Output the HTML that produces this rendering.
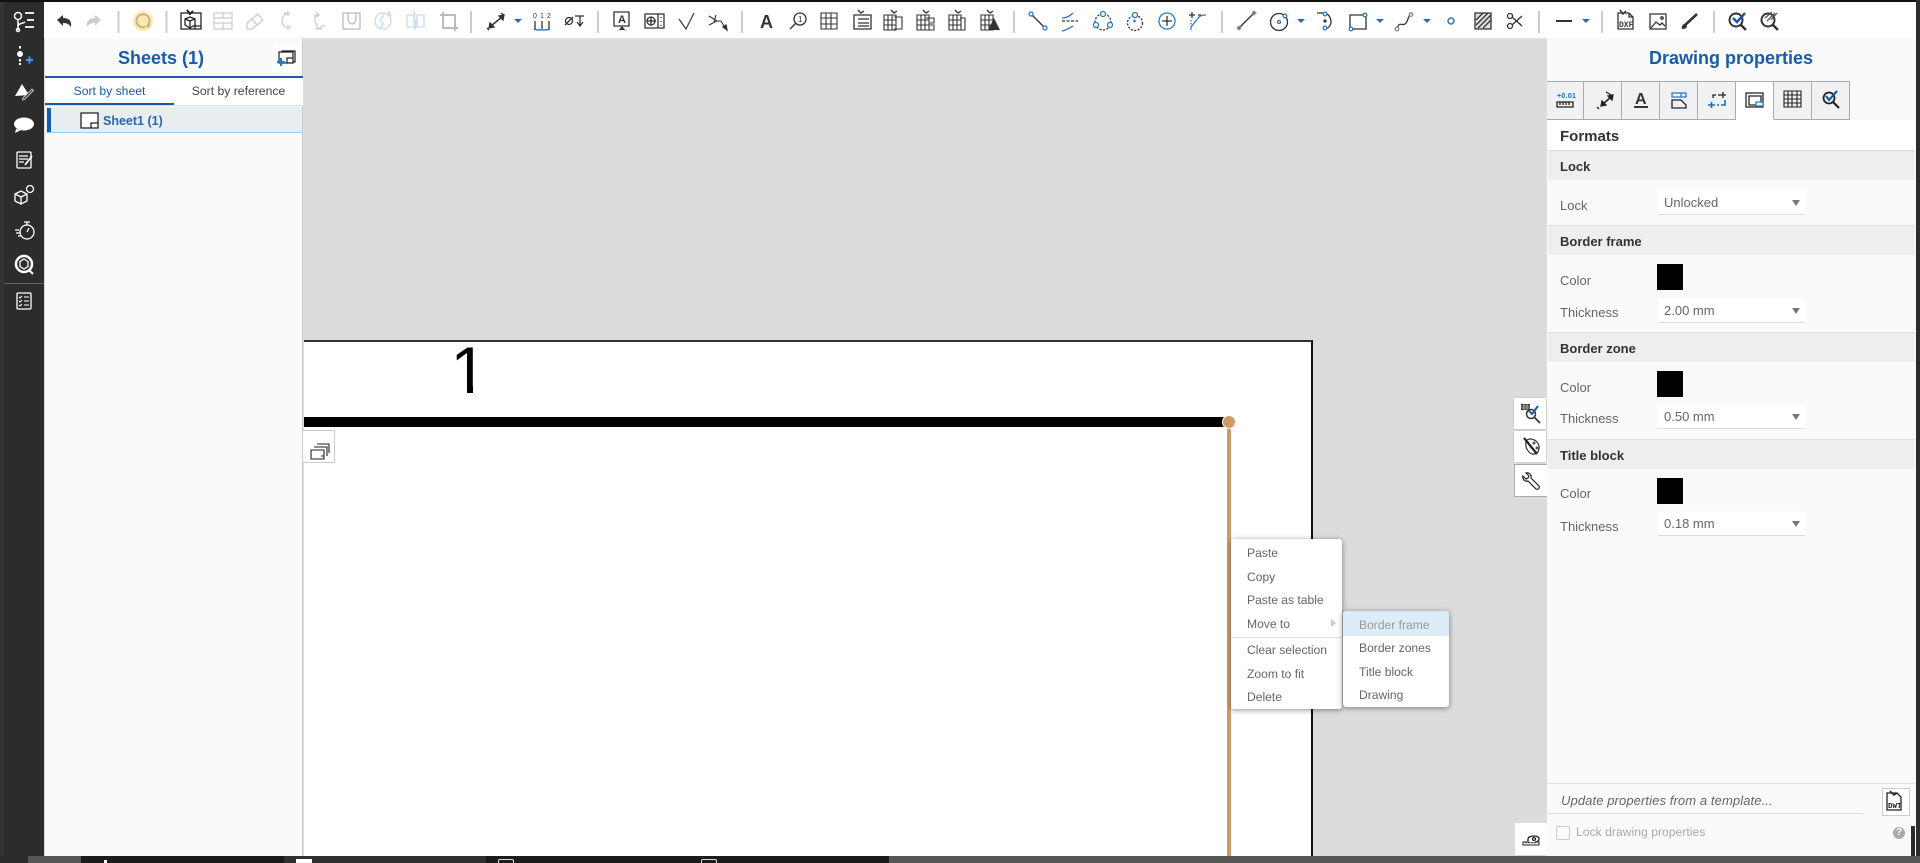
<!DOCTYPE html>
<html><head><meta charset="utf-8"><style>
html,body{margin:0;padding:0;width:1920px;height:863px;overflow:hidden;background:#dcdcdc}
body{position:relative;font-family:"Liberation Sans",sans-serif;font-size:13px;color:#555}
.a{position:absolute}
.t{position:absolute;white-space:nowrap;line-height:16px;height:16px}
.h{position:absolute;left:1548px;width:367px;height:29px;background:#eee;border-top:1px solid #ddd}
.h span{position:absolute;left:12px;top:8px;line-height:16px;font-weight:bold;font-size:13px;color:#333}
.sel{position:absolute;left:1658px;width:147px;height:24px;background:#fff;border-bottom:1.5px solid #ddd}
.sel span{position:absolute;left:6px;top:5px;line-height:16px;color:#666;font-size:13px}
.sel i{position:absolute;left:134px;top:10px;width:0;height:0;border:4px solid transparent;border-top:6px solid #777;border-bottom:0}
.sw{position:absolute;left:1657px;width:26px;height:26px;background:#000}
.tab{position:absolute;top:81px;height:37px;background:#f0f1f3;border:1px solid #aaa;border-left:0;box-sizing:content-box}
.side{position:absolute;left:1514px;width:32px;height:31px;background:#fff;box-shadow:0 0 2px #bbb}
.mi{position:absolute;white-space:nowrap;line-height:16px;color:#666;font-size:12.1px}
svg{position:absolute;left:0;top:0}
</style></head><body>
<!-- toolbar and frame -->
<div class="a" style="left:0;top:0;width:1920px;height:2px;background:#111"></div>
<div class="a" style="left:44px;top:2px;width:1872px;height:36px;background:#fff"></div>
<div class="a" style="left:0;top:2px;width:44px;height:854px;background:#2c2c2c"></div>
<div class="a" style="left:0;top:2px;width:4px;height:854px;background:#333"></div>
<div class="a" style="left:4px;top:283px;width:40px;height:1px;background:#666"></div>
<div class="a" style="left:1916px;top:0;width:4px;height:863px;background:#2c2c2c"></div>
<div class="a" style="left:44px;top:38px;width:1872px;height:1px;background:#e4e4e4"></div>

<!-- left panel -->
<div class="a" style="left:45px;top:38px;width:258px;height:818px;background:#fafafa;border-right:1px solid #ccc;box-sizing:border-box"></div>
<div class="t" style="left:46px;width:230px;text-align:center;top:47px;height:22px;line-height:22px;font-size:18px;font-weight:bold;color:#1a5ba8">Sheets (1)</div>
<div class="a" style="left:272px;top:44px;width:28px;height:28px;background:#fff;border-radius:4px"></div>
<div class="a" style="left:45px;top:76px;width:258px;height:2px;background:#1a5ba8"></div>
<div class="a" style="left:45px;top:78px;width:258px;height:27px;background:#fff"></div>
<div class="t" style="left:45px;width:129px;text-align:center;top:83px;font-size:12.2px;color:#1a5ba8">Sort by sheet</div>
<div class="t" style="left:174px;width:129px;text-align:center;top:83px;font-size:12.2px;color:#444">Sort by reference</div>
<div class="a" style="left:45px;top:103px;width:129px;height:2px;background:#1a5ba8"></div>
<div class="a" style="left:45px;top:105px;width:258px;height:1px;background:#ddd"></div>
<div class="a" style="left:46px;top:107px;width:256px;height:25px;background:#e8edf2;border-bottom:1px solid #8fd0f2"></div>
<div class="a" style="left:47px;top:108px;width:4px;height:24px;background:#1a5ba8"></div>
<div class="t" style="left:103px;top:113px;font-size:12.5px;font-weight:bold;color:#2a66ac">Sheet1 (1)</div>

<!-- sheet -->
<div class="a" style="left:304px;top:340px;width:1009px;height:523px;background:#fff;border-top:2px solid #333;border-right:2px solid #111;box-sizing:border-box"></div>
<div class="a" style="left:440px;top:333px;width:60px;height:55px;overflow:hidden"><div class="t" style="left:10.4px;top:0;height:74px;line-height:74px;font-size:66px;color:#000">1</div></div>
<div class="a" style="left:467px;top:386px;width:6px;height:7px;background:#000"></div>
<div class="a" style="left:304px;top:417px;width:922px;height:10px;background:#000"></div>
<div class="a" style="left:1227px;top:422px;width:4px;height:434px;background:#d09a64"></div>
<div class="a" style="left:1223px;top:416px;width:12px;height:12px;border-radius:50%;background:#d09a64;box-shadow:0 0 0 1px #fff"></div>
<div class="a" style="left:303px;top:430px;width:32px;height:33px;background:#fff;border:1px solid #ccc;border-left:0;box-sizing:border-box"></div>

<!-- context menus -->
<div class="a" style="left:1231px;top:539px;width:111px;height:170px;background:#fff;border-radius:3px;box-shadow:0 1px 6px rgba(0,0,0,.45)"></div>
<div class="mi" style="left:1247px;top:545px">Paste</div>
<div class="mi" style="left:1247px;top:569px">Copy</div>
<div class="mi" style="left:1247px;top:592px">Paste as table</div>
<div class="mi" style="left:1247px;top:616px">Move to</div>
<div class="a" style="left:1331px;top:619px;width:0;height:0;border:4px solid transparent;border-left:5px solid #ccc;border-right:0"></div>
<div class="a" style="left:1231px;top:637px;width:111px;height:1px;background:#ddd"></div>
<div class="mi" style="left:1247px;top:642px">Clear selection</div>
<div class="mi" style="left:1247px;top:666px">Zoom to fit</div>
<div class="mi" style="left:1247px;top:689px">Delete</div>
<div class="a" style="left:1343px;top:611px;width:106px;height:96px;background:#fff;border-radius:3px;box-shadow:0 1px 6px rgba(0,0,0,.45)"></div>
<div class="a" style="left:1343px;top:611px;width:106px;height:25px;background:#dcedf8;border-radius:3px 3px 0 0"></div>
<div class="mi" style="left:1359px;top:617px;color:#999">Border frame</div>
<div class="mi" style="left:1359px;top:640px">Border zones</div>
<div class="mi" style="left:1359px;top:664px">Title block</div>
<div class="mi" style="left:1359px;top:687px">Drawing</div>

<!-- right panel -->
<div class="a" style="left:1546px;top:38px;width:370px;height:818px;background:#fafafa;border-left:1px solid #ddd;box-sizing:border-box"></div>
<div class="t" style="left:1547px;width:368px;text-align:center;top:47px;height:22px;line-height:22px;font-size:18px;font-weight:bold;color:#1a5ba8">Drawing properties</div>
<div class="tab" style="left:1547px;width:36px"></div>
<div class="tab" style="left:1584px;width:37px"></div>
<div class="tab" style="left:1622px;width:37px"></div>
<div class="tab" style="left:1660px;width:37px"></div>
<div class="tab" style="left:1698px;width:37px"></div>
<div class="tab" style="left:1736px;width:37px;background:#fff;border-bottom-color:#fff"></div>
<div class="tab" style="left:1774px;width:37px"></div>
<div class="tab" style="left:1812px;width:37px"></div>
<div class="a" style="left:1547px;top:120px;width:368px;height:30px;background:#fff"></div>
<div class="t" style="left:1560px;top:129px;font-size:15px;font-weight:bold;color:#333">Formats</div>

<div class="h" style="top:150px"><span>Lock</span></div>
<div class="t" style="left:1560px;top:198px;color:#666">Lock</div>
<div class="sel" style="top:190px"><span>Unlocked</span><i></i></div>

<div class="h" style="top:225px"><span>Border frame</span></div>
<div class="t" style="left:1560px;top:273px;color:#666">Color</div><div class="sw" style="top:264px"></div>
<div class="t" style="left:1560px;top:305px;color:#666">Thickness</div>
<div class="sel" style="top:298px"><span>2.00 mm</span><i></i></div>

<div class="h" style="top:332px"><span>Border zone</span></div>
<div class="t" style="left:1560px;top:380px;color:#666">Color</div><div class="sw" style="top:371px"></div>
<div class="t" style="left:1560px;top:411px;color:#666">Thickness</div>
<div class="sel" style="top:404px"><span>0.50 mm</span><i></i></div>

<div class="h" style="top:439px"><span>Title block</span></div>
<div class="t" style="left:1560px;top:486px;color:#666">Color</div><div class="sw" style="top:478px"></div>
<div class="t" style="left:1560px;top:519px;color:#666">Thickness</div>
<div class="sel" style="top:511px"><span>0.18 mm</span><i></i></div>

<div class="a" style="left:1547px;top:783px;width:368px;height:1px;background:#ddd"></div>
<div class="t" style="left:1561px;top:793px;font-style:italic;color:#666;letter-spacing:.1px">Update properties from a template...</div>
<div class="a" style="left:1547px;top:813px;width:316px;height:1px;background:#ddd"></div>
<div class="a" style="left:1882px;top:788px;width:26px;height:26px;background:#fff;border:1px solid #ccc"></div>
<div class="a" style="left:1556px;top:826px;width:12px;height:12px;background:#fafafa;border:1px solid #ccc;border-radius:2px"></div>
<div class="t" style="left:1576px;top:824px;font-size:12.2px;color:#aaa">Lock drawing properties</div>
<div class="a" style="left:1893px;top:827px;width:12px;height:12px;border-radius:50%;background:#aaa;color:#fff;font-size:10px;line-height:12px;text-align:center;font-weight:bold">?</div>
<div class="a" style="left:1911px;top:826px;width:4px;height:30px;background:#2c2c2c"></div>

<!-- side buttons -->
<div class="side" style="top:398px"></div>
<div class="side" style="top:431px"></div>
<div class="side" style="top:464px;border:1px solid #aaa;border-right:0;box-shadow:none"></div>
<div class="side" style="top:823px;left:1515px;height:32px;box-shadow:none"></div>

<!-- bottom tabs -->
<div class="a" style="left:0;top:856px;width:1920px;height:7px;background:#555"></div>
<div class="a" style="left:0;top:856px;width:28px;height:7px;background:#2c2c2c"></div>
<div class="a" style="left:81px;top:856px;width:808px;height:7px;background:#1b1b1b"></div>
<div class="a" style="left:284px;top:856px;width:202px;height:7px;background:#303030"></div>
<div class="a" style="left:296px;top:859px;width:16px;height:4px;background:#fff"></div>
<div class="a" style="left:498px;top:859px;width:16px;height:4px;border:1px solid #ddd;border-bottom:0;border-radius:2px 2px 0 0;box-sizing:border-box"></div>
<div class="a" style="left:701px;top:859px;width:16px;height:4px;border:1px solid #ddd;border-bottom:0;border-radius:2px 2px 0 0;box-sizing:border-box"></div>
<div class="a" style="left:104px;top:860px;width:3px;height:3px;background:#fff"></div>

<!-- icons -->
<svg width="1920" height="863" viewBox="0 0 1920 863" fill="none" stroke-width="1.3">
<!-- separators -->
<g stroke="#ccc" stroke-width="2">
<path d="M118.500 11V33M166.500 11V33M471 11V33M598 11V33M742 11V33M1014 11V33M1222 11V33M1539 11V33M1602 11V33M1714 11V33"/>
</g>
<!-- undo/redo -->
<path d="M57 20l6-5v3c6 0 9 3 8 9-2-3-4-4-8-4v3z" fill="#333"/>
<path d="M101 20l-6-5v3c-6 0-9 3-8 9 2-3 4-4 8-4v3z" fill="#ccc"/>
<!-- regen -->
<circle cx="143" cy="21" r="10" fill="#fde9b0"/>
<path d="M148 25a6.500 6.500 0 1 0-3 2" stroke="#c2b48a" stroke-width="2"/>
<path d="M150 24l-1 4-4-2z" fill="#c2b48a"/>
<!-- drawing toolbar group 1 -->
<g stroke="#222">
<path d="M181 13h20v16h-20zM195 26h6v3h-6z"/>
<path d="M185 19l5-2 5 2v6l-5 3-5-3zM185 19l5 2 5-2M190 21v7"/>
<path d="M187 10l3 4 3-3" stroke-width="2"/>
</g>
<g stroke="#ccc">
<path d="M214 13h18v16h-18zM214 18h18M223 13v5M214 23h9v6M223 23h9"/>
<path d="M247 23l11-9 5 6-11 9h-5zM252 19l5 6"/>
<path d="M284 14l4-2v4M290 14h-5l-3 5v4l3 4h4M288 30v-4l3 2"/>
<path d="M316 12l3 3-3 2M318 15h-3v6M315 21l3 8 7-4M315 29l7 0"/>
<path d="M343 13h17v16h-17zM348 13v5c0 4 2 6 4 6s4-2 4-6v-5" stroke="#bbb"/>
<circle cx="383" cy="21" r="8" stroke="#c8daec"/><path d="M383 13v4l-3 3 3 3-2 5M388 15l1-3 2 4" stroke="#c8daec"/>
<path d="M407 15h7v12h-7zM417 15h7v12h-7zM413 10l2 4-1 4 2 4-1 8" stroke="#c8daec"/>
<path d="M443 12v16h15M440 15h15v16" stroke="#bbb" stroke-width="2"/>
</g>
<!-- dimension -->
<g stroke="#333">
<path d="M491 26l11-9" stroke-width="1.500"/>
<path d="M490 23l-1 5 5-1zM503 20l1-5-5 1z" fill="#333"/>
<path d="M501 13l3 2M489 30l-2-2"/>
<path d="M535 21v8M542 21v8M549 21v8"/>
</g>
<path d="M514 19h8l-4 4z" fill="#2b6cb8"/>
<path d="M534 29q1 1 8 1q6 0 8-1" stroke="#2b6cb8"/>
<g font-family="Liberation Sans" font-size="7" fill="#333"><text x="533" y="18">0</text><text x="540" y="18">1</text><text x="547" y="18">2</text></g>
<g stroke="#333">
<circle cx="569" cy="21" r="3.500"/><path d="M565 25l8-8M575 16h9M580 16v9M577 22l3 4 3-4"/>
<path d="M614 12h15v14h-15z"/>
</g>
<path d="M619 30h6l2 1h-10zM622 26l-4 5h8z" fill="#333"/>
<text x="618" y="23" font-family="Liberation Sans" font-size="11" font-weight="bold" fill="#333">A</text>
<g stroke="#333">
<path d="M645 14h19v14h-19zM658 14v14"/>
<circle cx="651" cy="21" r="4"/><path d="M647 21h9M651 17v8M661 17v1M661 21v1M661 25v1"/>
<path d="M679 19l7 10 8-16" stroke="#444"/>
<path d="M709 16l8 5-8 4M716 15l-2 7M717 21h4l4 7" stroke-width="1.100"/><path d="M723 27l4 3-1-5z" fill="#333"/>
</g>
<text x="760" y="28" font-family="Liberation Sans" font-size="18" font-weight="bold" fill="#333">A</text>
<g stroke="#333">
<circle cx="800" cy="19" r="6"/><path d="M796 23l-6 6"/>
<text x="798" y="22" font-family="Liberation Sans" font-size="8" fill="#333" stroke="none">1</text>
<path d="M821 13h16v16h-16zM821 18h16M821 24h16M826 13v16M831 13v16" stroke-width="1.100"/>
<path d="M854 15h17v14h-17zM858 19h11M858 23h11M858 26h11" stroke-width="1.300"/>
<path d="M884 15h12v15h-12zM884 20h12M884 25h12M888 15v15M892 15v15M894 17h8v12h-8" stroke-width="1.100"/>
<path d="M917 15h12v15h-12zM917 20h12M917 25h12M921 15v15M925 15v15M926 18h8v12h-8" stroke-width="1.100"/>
<path d="M949 15h12v15h-12zM949 20h12M949 25h12M953 15v15M957 15v15M960 18h5v12h-5" stroke-width="1.100"/>
<path d="M981 15h12v15h-12zM981 20h12M981 25h12M985 15v15M989 15v15" stroke-width="1.100"/>
</g>
<path d="M858 10l3 3 3-2M891 10l3 3 3-2M923 10l3 3 3-2M955 10l3 3 3-2M987 10l3 3 3-2" stroke="#333"/>
<path d="M988 30h12l-6-12z" fill="#333"/>
<circle cx="932" cy="24" r="2.500" fill="#999"/>
<!-- constraints -->
<g stroke="#333">
<path d="M1031 14l14 14"/>
<path d="M1062 18c5 0 8-2 11-5M1062 31c5-1 7-3 11-5" stroke="#2b78c2"/>
<path d="M1062 21h16" stroke-dasharray="3 1.500"/>
<circle cx="1103" cy="22" r="8" stroke-dasharray="2 1.500"/>
<circle cx="1135" cy="23" r="7.500" stroke-dasharray="2 1.500"/>
</g>
<g stroke="#2b78c2" fill="#fff">
<circle cx="1031" cy="14" r="2"/><circle cx="1045" cy="28" r="2"/>
<circle cx="1103" cy="14" r="2.500"/><circle cx="1096" cy="25" r="2.500"/><circle cx="1110" cy="25" r="2.500"/>
<circle cx="1135" cy="15" r="2.500"/>
<circle cx="1167" cy="21" r="8"/>
</g>
<path d="M1133 21h3M1134.500 19.500v3" stroke="#2b78c2"/>
<path d="M1162 21h10M1167 16v10" stroke="#333"/>
<path d="M1189 15h6M1192 12v6M1198 15h3" stroke="#333"/>
<path d="M1191 30v-3l8-10c1-1 3-2 7-2" stroke="#2b78c2"/>
<path d="M1191 20v5" stroke="#2b78c2" stroke-dasharray="1.500 1.500"/>
<!-- sketch -->
<g stroke="#333">
<path d="M1238 29l17-17" stroke-width="1.300"/><path d="M1239 30l2-2-2-2-2 2zM1254 15l2-2-2-2-2 2z" stroke="#999"/>
<circle cx="1279" cy="22" r="8.500"/>
<path d="M1317 13h8M1325 13c7 2 9 14 0 16" />
<circle cx="1325" cy="21" r="1" fill="#333"/>
<path d="M1350 15h16v14h-16z"/>
<path d="M1397 29c2-8 5-3 8-5s2-5 5-9"/>
<circle cx="1397" cy="29" r="1.800" stroke="#888" fill="#fff"/><circle cx="1411" cy="14.500" r="1.800" stroke="#888" fill="#fff"/>
</g>
<g stroke="#2b78c2" fill="#fff">
<circle cx="1279" cy="22" r="1.500"/><circle cx="1285" cy="16" r="1.800"/>
<circle cx="1325" cy="14" r="1.800"/><circle cx="1325" cy="28" r="1.800"/>
<circle cx="1365" cy="15" r="1.800"/><circle cx="1351" cy="29" r="1.800"/>
<circle cx="1451" cy="21" r="3" stroke-width="1.500"/>
</g>
<path d="M1297 19h8l-4 4zM1376 19h8l-4 4zM1423 19h8l-4 4zM1582 19h8l-4 4z" fill="#2b6cb8"/>
<path d="M1475 13h16v16h-16z" fill="#ddd" stroke="#333"/>
<path d="M1476 20l7-7M1476 25l12-12M1478 28l13-13M1483 28l8-8" stroke="#333"/>
<g stroke="#333">
<circle cx="1510" cy="16" r="2.500"/><circle cx="1510" cy="26" r="2.500"/><path d="M1512 17l10 9M1512 25l10-9"/>
<path d="M1556 21h16" stroke-width="2"/>
<path d="M1618 13h11l4 4v12h-15zM1629 13v4h4"/>
</g>
<path d="M1620 10l3 4 3-3" stroke="#333" stroke-width="1.500"/>
<text x="1619" y="27" font-family="Liberation Mono" font-size="8" font-weight="bold" fill="#333">DXF</text>
<g stroke="#333">
<path d="M1650 14h16v15h-16z"/><path d="M1651 28l5-6 4 3 2-2 3 3"/><circle cx="1662" cy="18" r="1.200"/>
</g>
<path d="M1684 26l13-12" stroke="#333" stroke-width="2.600"/><path d="M1682 29c-1-3 1-5 3-5l2 2c0 2-2 3-5 3z" fill="#333"/>
<!-- check search -->
<circle cx="1736" cy="20" r="6.500" stroke="#333" stroke-width="2"/><path d="M1741 25l5 5" stroke="#333" stroke-width="2.500"/>
<path d="M1733 18l4 4 8-9" stroke="#1a5ba8" stroke-width="2.500"/>
<circle cx="1768" cy="20" r="6.500" stroke="#333" stroke-width="2"/><path d="M1773 25l5 5" stroke="#333" stroke-width="2.500"/>
<path d="M1765 18l7-6M1767 21l8-8M1771 20l6-7" stroke="#555"/>
<!-- left sidebar -->
<g stroke="#fff" stroke-width="1.500">
<circle cx="18" cy="16" r="3.500"/><path d="M18 20v10M18 27c0-4 4-3 7-5"/><circle cx="18" cy="30" r="1.500"/>
<path d="M25 13h9M27 20h7M25 27h9" stroke-width="1.800"/>
</g>
<g fill="#fff">
<circle cx="20" cy="54" r="3"/><rect x="19" y="46" width="2" height="2.500"/><rect x="19" y="59" width="2" height="2.500"/><rect x="19" y="63" width="2" height="2"/>
<path d="M15 96l7-12 7 11z"/>
<ellipse cx="24" cy="124" rx="10" ry="6.500"/><path d="M16 129l-1 4 6-3z"/>
</g>
<path d="M26 60h7M29.500 56.500v7" stroke="#4b95f2" stroke-width="2"/>
<path d="M23 98l9-9 1.500 1.500-9 9-2 .5z" stroke="#ccc" fill="#2c2c2c" stroke-width=".9"/>
<g stroke="#fff" stroke-width="1.300">
<rect x="17" y="152" width="14" height="16" rx="1"/><path d="M19 156h9M19 159h9M19 162h5"/><path d="M25 165l7-9" stroke-width="1.800"/>
<path d="M15 194l6-3 6 3v7l-6 3-6-3zM15 194l6 3 6-3M21 197v7"/>
<circle cx="30" cy="189" r="3.500"/>
<circle cx="27" cy="232" r="7"/><path d="M24 222h6M27 222v3M27 232l2-4M15 230h4M16 233h4M18 236h3"/>
<circle cx="24" cy="264" r="8" stroke-width="2.500"/>
<path d="M24 259l4 2.500v5l-4 2.500-4-2.500v-5z"/><path d="M29 270l4 4" stroke-width="2"/>
<rect x="17" y="293" width="14" height="16" rx="1"/><path d="M24 297h5M24 301h5M24 305h5M19 297l1 1 2-2M19 301l1 1 2-2M19 305l1 1 2-2" stroke-width="1"/>
</g>
<!-- panel icons -->
<path d="M282 52V51h13v11h-2M279 52h14v11h-14zM287 58h6v5h-6z" stroke="#222" stroke-width="1.200"/>
<path d="M277 62h8M281 58v8" stroke="#2b78c2" stroke-width="2.200"/>
<path d="M81 113h17v15h-17zM91 123h7v5h-7z" stroke="#222" stroke-width="1.300" fill="#fff"/>
<path d="M311 450h13v9h-13zM314 447h13v9M317 444h12v9M321 456h3v3" stroke="#222" stroke-width="1.100" fill="#fff"/>
<!-- properties tabs icons -->
<g stroke="#222">
<path d="M1557 102h16v5h-16zM1560 102v3M1563 102v3M1566 102v3M1569 102v3"/>
<path d="M1603 104l8-7" stroke-width="1.500"/><path d="M1602 101l-1 5 5-1zM1612 100l1-5-5 1z" fill="#222"/>
<path d="M1606 92l5 3 1 1M1597 107l2 2"/>
<path d="M1634 107h14" stroke-width="1.800"/>
<path d="M1672 100h9l5 5v3h-14z"/>
<path d="M1746 93h17v14h-17zM1749 96h12v9h-12z" />
<path d="M1784 91h17v16h-17zM1784 95h17M1784 99h17M1784 103h17M1788 91v16M1792 91v16M1797 91v16" stroke-width="1.100"/>
<circle cx="1829" cy="98" r="5.500" stroke-width="1.800"/><path d="M1833 102l6 6" stroke-width="2.200"/>
</g>
<text x="1557" y="98" font-family="Liberation Sans" font-size="7" font-weight="bold" fill="#1d6fb8" letter-spacing=".3">+0.01</text>
<text x="1635" y="104" font-family="Liberation Sans" font-size="16" font-weight="bold" fill="#333">A</text>
<path d="M1672 93h14v4h-14zM1681 93v4" stroke="#2b78c2"/>
<path d="M1713 98v-3h3M1718 95h2M1723 92v6M1720 95h6" stroke="#222"/>
<path d="M1708 105h7M1711.500 102v6M1717 105h2M1721 105h4v-5" stroke="#1a6bbf" stroke-width="1.600"/>
<path d="M1756 102h7v4h-7z" stroke="#2b78c2" fill="#fff"/>
<path d="M1826 96l3 4 8-9" stroke="#1a5ba8" stroke-width="2.200"/>
<!-- dwt -->
<path d="M1887 793h10l4 4v13h-14z" stroke="#222" fill="#fff"/><path d="M1890 791l4 4 3-2" stroke="#222" stroke-width="1.500"/>
<text x="1888" y="808" font-family="Liberation Mono" font-size="7.500" font-weight="bold" fill="#222">DWT</text>
<!-- side icons -->
<path d="M1521 404h9v6h-9z" fill="#333"/><path d="M1521 406h9M1521 408h9M1524 404v6M1527 404v6" stroke="#fff" stroke-width=".5"/>
<circle cx="1531" cy="414" r="4.500" stroke="#333" stroke-width="1.500"/><path d="M1534 417l6 6" stroke="#333" stroke-width="1.800"/>
<path d="M1529 411l3 3 6-8" stroke="#1a5ba8" stroke-width="2"/>
<path d="M1530 439c6 0 10 5 9 10s-6 7-10 3-5-13 1-13z" stroke="#333" stroke-width="1.200"/>
<circle cx="1534" cy="443" r="1.500" fill="#555"/><circle cx="1537" cy="448" r="1.500" fill="#555"/>
<path d="M1524 438l13 16" stroke="#222" stroke-width="2.200"/>
<path d="M1523 476l3 3 2-1 1-2-3-3c3-1 6 2 5 5l8 8c1 2-1 4-3 3l-8-8c-3 1-6-2-5-5z" stroke="#222" stroke-width="1.200"/>
<path d="M1523 842h16v3h-16zM1526 842v1.500M1529 842v1.500M1532 842v1.500M1535 842v1.500" stroke="#222" fill="#fff" stroke-width="1"/>
<path d="M1528 842v-3c0-2 3-3 6-3s5 1 5 3-2 3-4 3" stroke="#222" fill="#fff"/>
<circle cx="1534" cy="839" r="1.500" stroke="#222"/>
</svg>
</body></html>
